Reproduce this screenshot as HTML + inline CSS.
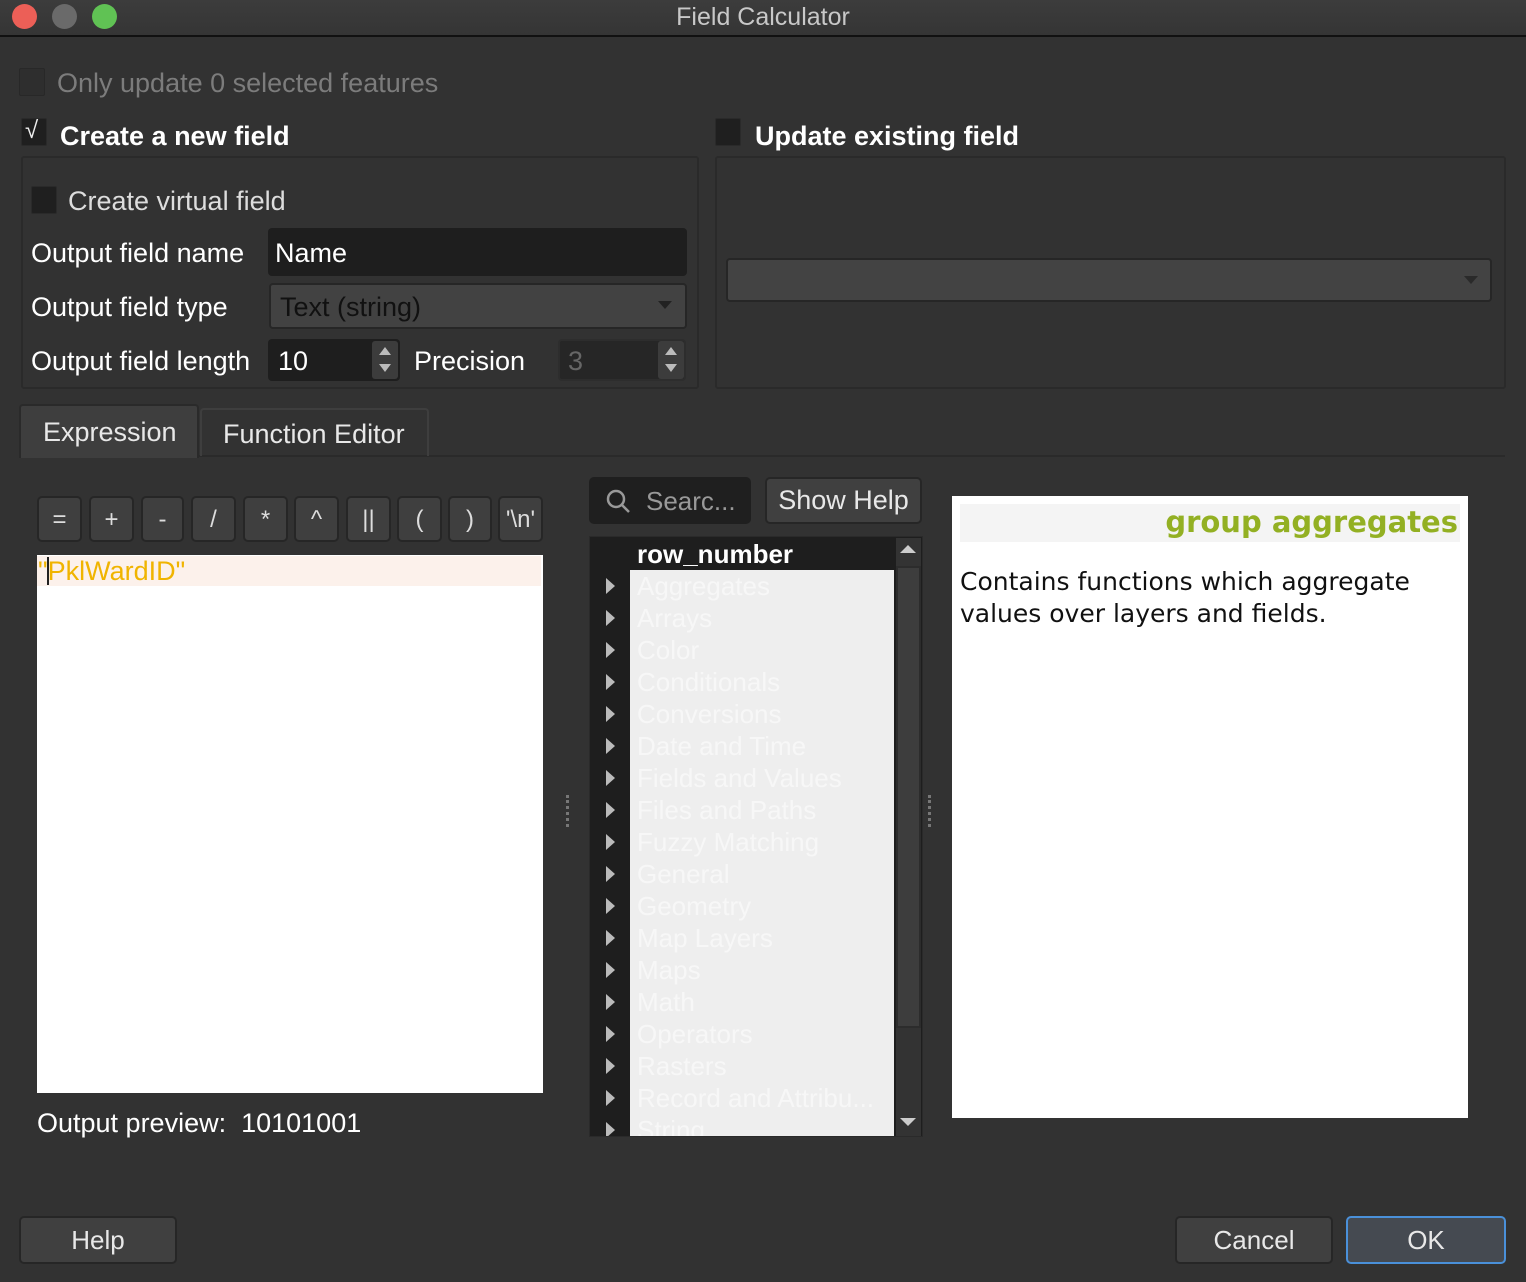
<!DOCTYPE html>
<html><head><meta charset="utf-8"><style>
*{margin:0;padding:0;box-sizing:border-box}
body{width:1526px;height:1282px;background:#323232;font-family:"Liberation Sans",sans-serif;color:#fff;position:relative;overflow:hidden}
.a{position:absolute}
.t{font-size:27px;white-space:nowrap;line-height:1}
.cb{position:absolute;width:26px;height:28px;background:#1f1f1f;border:1px solid #2a2a2a;border-radius:2px}
.btn{position:absolute;background:#404040;border:2px solid #262626;border-radius:5px;color:#e8e8e8;text-align:center;font-size:26px}
.op{position:absolute;top:496px;height:46px;background:#3f3f3f;border:2px solid #262626;border-radius:5px;color:#ddd;font-size:24px;text-align:center;line-height:44px}
.tri{position:absolute;left:606px;width:0;height:0;border-top:8px solid transparent;border-bottom:8px solid transparent;border-left:9px solid #bbb}
.li{position:absolute;left:637px;font-size:26px;color:#f7f7f7;line-height:1}
</style></head><body>
<div class="a" style="left:0;top:0;width:1526px;height:37px;background:linear-gradient(#3c3c3c,#353535);border-bottom:2px solid #111"></div>
<div class="a" style="left:12px;top:4px;width:25px;height:25px;border-radius:50%;background:#ec5f57"></div>
<div class="a" style="left:52px;top:4px;width:25px;height:25px;border-radius:50%;background:#6a6a6a"></div>
<div class="a" style="left:92px;top:4px;width:25px;height:25px;border-radius:50%;background:#60c254"></div>
<div class="a t" style="left:0;width:1526px;text-align:center;top:5px;color:#c8c8c8;font-size:25px">Field Calculator</div>

<div class="cb" style="left:19px;top:68px;background:#2e2e2e;border-color:#282828"></div>
<div class="a t" style="left:57px;top:70px;color:#7c7c7c">Only update 0 selected features</div>

<div class="cb" style="left:21px;top:118px"></div>
<div class="a t" style="left:25px;top:119px;font-size:24px;color:#eee">√</div>
<div class="a t" style="left:60px;top:123px;font-weight:bold">Create a new field</div>
<div class="a" style="left:21px;top:156px;width:678px;height:233px;border:2px solid #2a2a2a;border-radius:3px"></div>
<div class="cb" style="left:31px;top:186px"></div>
<div class="a t" style="left:68px;top:188px;color:#ddd">Create virtual field</div>
<div class="a t" style="left:31px;top:240px">Output field name</div>
<div class="a" style="left:268px;top:228px;width:419px;height:48px;background:#1e1e1e;border-radius:4px"></div>
<div class="a t" style="left:275px;top:240px">Name</div>
<div class="a t" style="left:31px;top:294px">Output field type</div>
<div class="a" style="left:269px;top:283px;width:418px;height:46px;background:#424242;border:2px solid #262626;border-radius:4px"></div>
<div class="a t" style="left:280px;top:294px;color:#111">Text (string)</div>
<div class="a" style="left:658px;top:301px;border-left:7px solid transparent;border-right:7px solid transparent;border-top:8px solid #222"></div>
<div class="a t" style="left:31px;top:348px">Output field length</div>
<div class="a" style="left:268px;top:339px;width:132px;height:42px;background:#1e1e1e;border-radius:4px"></div>
<div class="a" style="left:372px;top:341px;width:26px;height:38px;background:#3c3c3c;border-radius:3px"></div>
<div class="a" style="left:379px;top:347px;border-left:6px solid transparent;border-right:6px solid transparent;border-bottom:8px solid #bbb"></div>
<div class="a" style="left:379px;top:364px;border-left:6px solid transparent;border-right:6px solid transparent;border-top:8px solid #bbb"></div>
<div class="a t" style="left:278px;top:348px">10</div>
<div class="a t" style="left:414px;top:348px">Precision</div>
<div class="a" style="left:558px;top:339px;width:128px;height:42px;background:#262626;border:2px solid #2d2d2d;border-radius:4px"></div>
<div class="a" style="left:658px;top:341px;width:26px;height:38px;background:#3c3c3c;border-radius:3px"></div>
<div class="a" style="left:665px;top:347px;border-left:6px solid transparent;border-right:6px solid transparent;border-bottom:8px solid #bbb"></div>
<div class="a" style="left:665px;top:364px;border-left:6px solid transparent;border-right:6px solid transparent;border-top:8px solid #bbb"></div>
<div class="a t" style="left:568px;top:348px;color:#666">3</div>

<div class="cb" style="left:715px;top:118px"></div>
<div class="a t" style="left:755px;top:123px;font-weight:bold">Update existing field</div>
<div class="a" style="left:715px;top:156px;width:791px;height:233px;border:2px solid #2a2a2a;border-radius:3px"></div>
<div class="a" style="left:726px;top:258px;width:766px;height:44px;background:#434343;border:2px solid #262626;border-radius:4px"></div>
<div class="a" style="left:1464px;top:276px;border-left:7px solid transparent;border-right:7px solid transparent;border-top:8px solid #2a2a2a"></div>

<div class="a" style="left:19px;top:455px;width:1486px;height:2px;background:#2a2a2a"></div>
<div class="a" style="left:19px;top:404px;width:180px;height:54px;background:#3e3e3e;border:2px solid #2a2a2a;border-bottom:none;border-radius:4px 4px 0 0"></div>
<div class="a t" style="left:43px;top:419px;color:#e8e8e8">Expression</div>
<div class="a" style="left:200px;top:408px;width:229px;height:48px;border:2px solid #3e3e3e;border-bottom:none;border-radius:4px 4px 0 0"></div>
<div class="a t" style="left:223px;top:421px;color:#e8e8e8">Function Editor</div>

<div class="op" style="left:37px;width:45px">=</div>
<div class="op" style="left:89px;width:45px">+</div>
<div class="op" style="left:141px;width:43px">-</div>
<div class="op" style="left:191px;width:45px">/</div>
<div class="op" style="left:243px;width:45px">*</div>
<div class="op" style="left:294px;width:45px">^</div>
<div class="op" style="left:346px;width:45px">||</div>
<div class="op" style="left:397px;width:45px">(</div>
<div class="op" style="left:448px;width:44px">)</div>
<div class="op" style="left:498px;width:45px">'\n'</div>

<div class="a" style="left:37px;top:555px;width:506px;height:538px;background:#fff"></div>
<div class="a" style="left:37px;top:556px;width:504px;height:30px;background:#fcf1eb"></div>
<div class="a" style="left:47px;top:557px;width:2px;height:28px;background:#222"></div>
<div class="a t" style="left:38px;top:558px;color:#f0b400">"PklWardID"</div>
<div class="a t" style="left:37px;top:1110px">Output preview:&nbsp; 10101001</div>
<div class="a" style="left:566px;top:795px;width:3px;height:32px;border-left:3px dotted #777"></div>
<div class="a" style="left:928px;top:795px;width:3px;height:32px;border-left:3px dotted #777"></div>

<div class="a" style="left:589px;top:477px;width:162px;height:47px;background:#1f1f1f;border-radius:5px"></div>
<svg class="a" style="left:604px;top:487px" width="28" height="28" viewBox="0 0 28 28"><circle cx="12" cy="12" r="8" fill="none" stroke="#999" stroke-width="2.5"/><line x1="18" y1="18" x2="25" y2="25" stroke="#999" stroke-width="2.5"/></svg>
<div class="a t" style="left:646px;top:488px;color:#999;font-size:26px">Searc...</div>
<div class="btn" style="left:765px;top:477px;width:157px;height:47px;line-height:43px;font-size:27px">Show Help</div>

<div class="a" style="left:589px;top:536px;width:334px;height:601px;background:#1e1e1e;border:1px solid #2a2a2a"></div>
<div class="a" style="left:630px;top:570px;width:264px;height:566px;background:#eeeeee"></div>
<div class="li" style="top:541px;font-weight:bold;color:#fff">row_number</div>
<div class="a" style="left:896px;top:538px;width:25px;height:598px;background:#333"></div>
<div class="a" style="left:896px;top:566px;width:25px;height:462px;background:#3d3d3d;border:2px solid #2c2c2c"></div>
<div class="a" style="left:900px;top:545px;border-left:8px solid transparent;border-right:8px solid transparent;border-bottom:8px solid #ccc"></div>
<div class="a" style="left:900px;top:1118px;border-left:8px solid transparent;border-right:8px solid transparent;border-top:8px solid #ccc"></div>
<div class="tri" style="top:578px"></div><div class="li" style="top:573px">Aggregates</div>
<div class="tri" style="top:610px"></div><div class="li" style="top:605px">Arrays</div>
<div class="tri" style="top:642px"></div><div class="li" style="top:637px">Color</div>
<div class="tri" style="top:674px"></div><div class="li" style="top:669px">Conditionals</div>
<div class="tri" style="top:706px"></div><div class="li" style="top:701px">Conversions</div>
<div class="tri" style="top:738px"></div><div class="li" style="top:733px">Date and Time</div>
<div class="tri" style="top:770px"></div><div class="li" style="top:765px">Fields and Values</div>
<div class="tri" style="top:802px"></div><div class="li" style="top:797px">Files and Paths</div>
<div class="tri" style="top:834px"></div><div class="li" style="top:829px">Fuzzy Matching</div>
<div class="tri" style="top:866px"></div><div class="li" style="top:861px">General</div>
<div class="tri" style="top:898px"></div><div class="li" style="top:893px">Geometry</div>
<div class="tri" style="top:930px"></div><div class="li" style="top:925px">Map Layers</div>
<div class="tri" style="top:962px"></div><div class="li" style="top:957px">Maps</div>
<div class="tri" style="top:994px"></div><div class="li" style="top:989px">Math</div>
<div class="tri" style="top:1026px"></div><div class="li" style="top:1021px">Operators</div>
<div class="tri" style="top:1058px"></div><div class="li" style="top:1053px">Rasters</div>
<div class="tri" style="top:1090px"></div><div class="li" style="top:1085px">Record and Attribu...</div>
<div class="a" style="left:590px;top:1117px;width:304px;height:19px;overflow:hidden"><div class="tri" style="left:16px;top:5px"></div><div class="li" style="left:47px;top:0px">String</div></div>

<div class="a" style="left:952px;top:496px;width:516px;height:622px;background:#fff"></div>
<div class="a" style="left:960px;top:504px;width:500px;height:38px;background:#f4f4f4"></div>
<div class="a t" style="left:960px;width:498px;text-align:right;top:508px;font-family:'DejaVu Sans',sans-serif;font-weight:bold;font-size:29px;color:#93b023">group aggregates</div>
<div class="a" style="left:960px;top:566px;font-family:'DejaVu Sans',sans-serif;font-size:25px;color:#111;line-height:32px;width:500px">Contains functions which aggregate<br>values over layers and fields.</div>

<div class="btn" style="left:19px;top:1216px;width:158px;height:48px;line-height:44px">Help</div>
<div class="btn" style="left:1175px;top:1216px;width:158px;height:48px;line-height:44px">Cancel</div>
<div class="btn" style="left:1346px;top:1216px;width:160px;height:48px;line-height:44px;background:#454a51;border-color:#4a90d9">OK</div>
</body></html>
